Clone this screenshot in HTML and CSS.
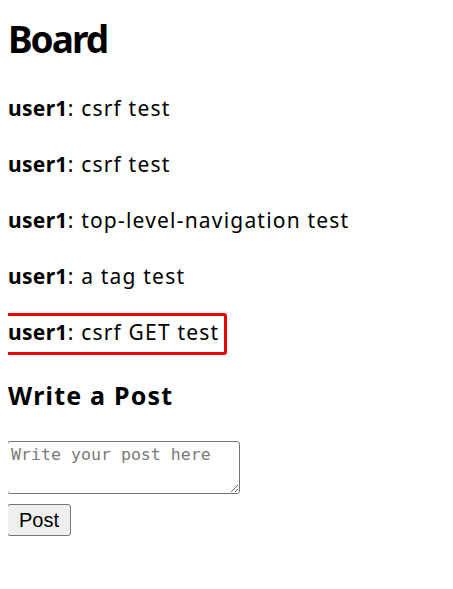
FILE: index.html
```html
<!DOCTYPE html>
<html lang="ko">
<head>
  <meta charset="UTF-8" />
  <meta name="viewport" content="width=device-width, initial-scale=1.0"/>
  <title>Board</title>
  <link rel="stylesheet" href="styles.css">
</head>
<body>
  <h1 class="title">Board</h1>
  <div class="posts">
    <p class="post"><b>user1</b>: csrf test</p>
    <p class="post"><b>user1</b>: csrf test</p>
    <p class="post"><b>user1</b>: top-level-navigation test</p>
    <p class="post"><b>user1</b>: a tag test</p>
    <p class="post post-marked"><b>user1</b>: csrf GET test</p>
  </div>
  <h2 class="subtitle">Write a Post</h2>
  <form class="post-form" onsubmit="return false;">
    <textarea class="post-input" placeholder="Write your post here"></textarea>
    <button class="post-btn" type="submit">Post</button>
  </form>
</body>
</html>
```

FILE: styles.css
```css
body {
  margin: 0 8px 8px;
  font-family: 'Noto Sans', 'Noto Sans CJK KR', sans-serif;
  color: #000;
  background: #fff;
}
.title {
  font-size: 37px;
  font-weight: 700;
  line-height: 50px;
  letter-spacing: -2px;
  margin: 14px 0 30px;
}
.posts {
  display: flex;
  flex-direction: column;
  align-items: flex-start;
  gap: 28px;
}
.post {
  margin: 0;
  font-size: 21px;
  line-height: 28px;
  letter-spacing: 1.2px;
}
.post b {
  font-weight: 700;
  letter-spacing: 0.3px;
}
.post-marked {
  border: 3px solid #ee0000;
  border-radius: 3px;
  padding: 2px 5px 6px 2px;
  margin: -5px 0 -9px -5px;
}
.subtitle {
  font-size: 25px;
  font-weight: 700;
  line-height: 34px;
  letter-spacing: 1.2px;
  margin: 32px 0 29px;
}
.post-form {
  display: flex;
  flex-direction: column;
  align-items: flex-start;
  gap: 10px;
}
.post-input {
  width: 233px;
  height: 53px;
  box-sizing: border-box;
  margin: 0 0 0 -1px;
  padding: 3px 3px;
  border: 1px solid #767676;
  border-radius: 3px;
  font-family: 'DejaVu Sans Mono', monospace;
  font-size: 16.6px;
}
.post-input::placeholder {
  color: #7a7a7a;
}
.post-btn {
  margin: 0 0 0 -1px;
  width: 64px;
  height: 32px;
  font-family: 'Liberation Sans', Arial, sans-serif;
  font-size: 20px;
  color: #000;
  background: #efefef;
  border: 1px solid #767676;
  border-radius: 3px;
  padding: 0;
}
```
